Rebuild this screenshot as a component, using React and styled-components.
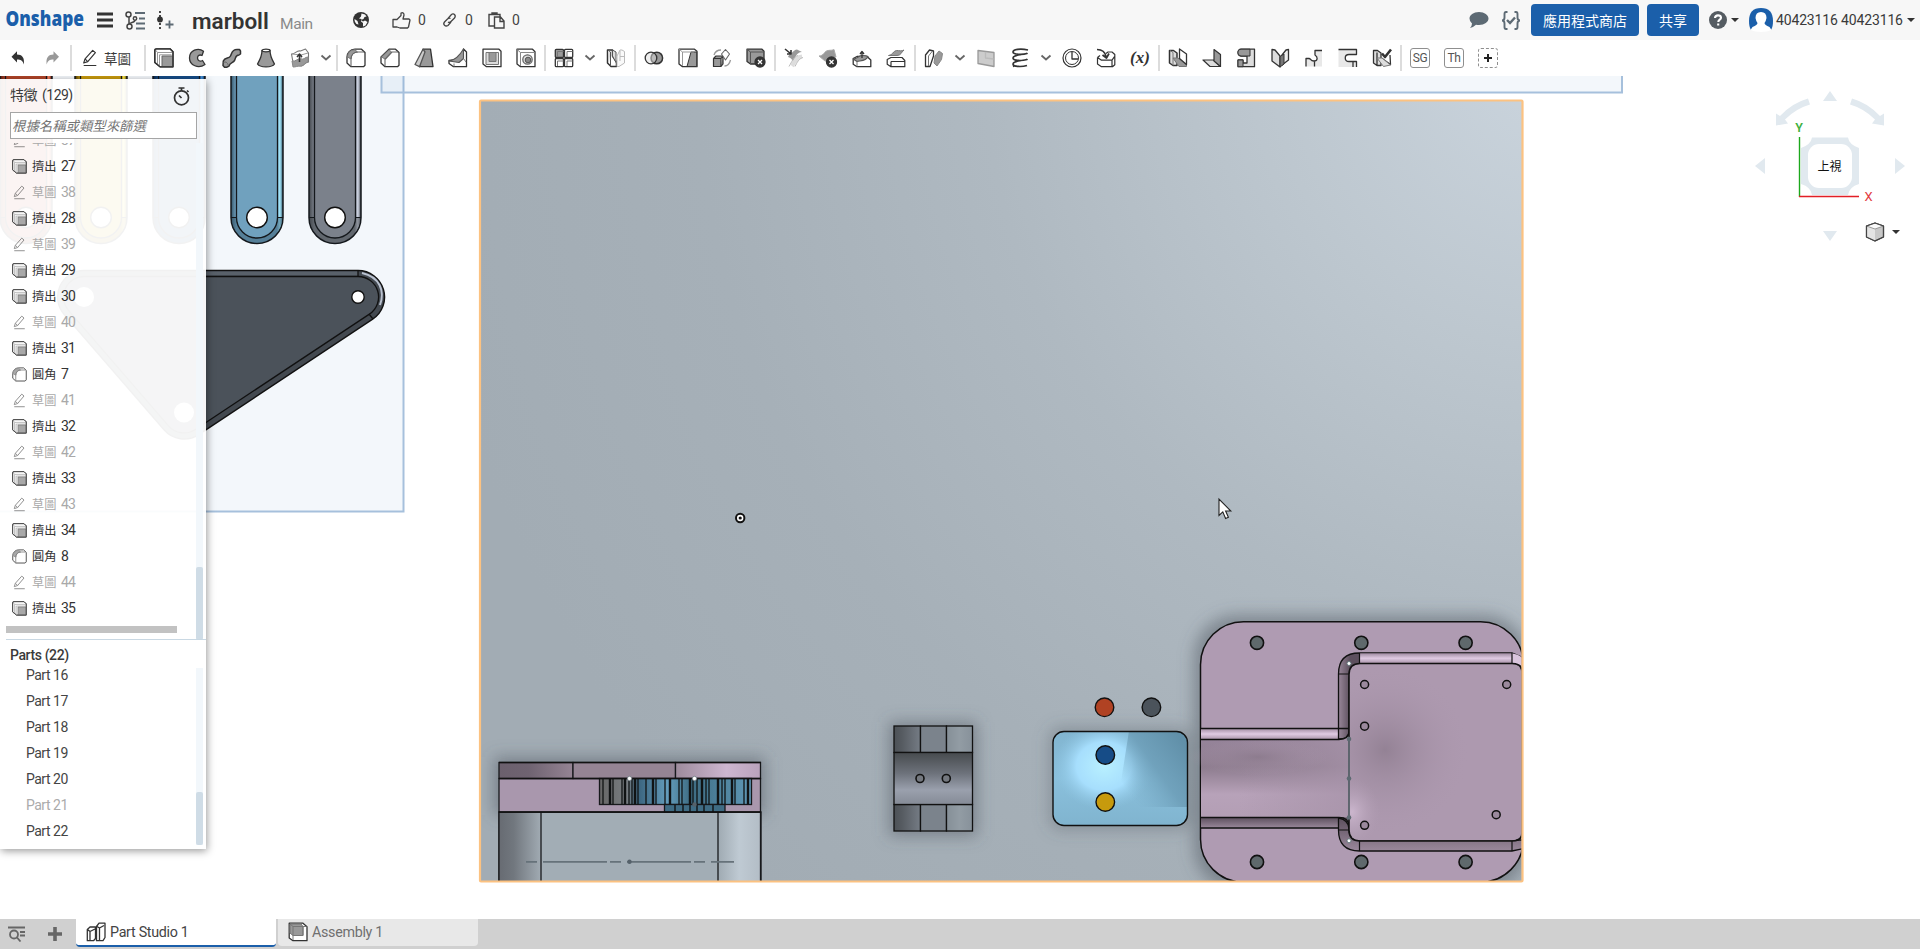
import React from "react";
import styled, { createGlobalStyle, css } from "styled-components";

const GlobalStyle = createGlobalStyle`
  html, body { margin: 0; padding: 0; background: #fff; }
  body { width: 1920px; height: 949px; overflow: hidden; }
  * { box-sizing: border-box; }
`;

const sans = `Roboto, "Noto Sans CJK TC", "Open Sans", sans-serif`;

/* ---------- page frame ---------- */

const Page = styled.div`
  width: 1920px;
  height: 949px;
  display: flex;
  flex-direction: column;
  font-family: ${sans};
  font-size: 14px;
  color: #3a3a3a;
  background: #fff;
`;

const Header = styled.header`
  height: 40px;
  flex: none;
  display: flex;
  align-items: center;
  justify-content: space-between;
  background: #f7f7f7;
  padding: 0 5px 0 6px;
`;

const HeaderSide = styled.div`
  display: flex;
  align-items: center;
  height: 40px;
`;

const Slot = styled.div`
  width: ${(p) => p.$w}px;
  margin-left: ${(p) => p.$gap || 0}px;
  height: 40px;
  flex: none;
  display: flex;
  align-items: center;
  white-space: nowrap;
  svg { display: block; flex: none; overflow: visible; }
`;

const DocName = styled(Slot)`
  font-size: 22.5px;
  font-weight: 600;
  letter-spacing: 0;
  color: #333;
  padding-top: 2px;
`;

const Branch = styled(Slot)`
  font-size: 15.5px;
  letter-spacing: -0.4px;
  color: #8a8a8a;
  padding-top: 7px;
`;

const Count = styled(Slot)`
  font-size: 14px;
  color: #444;
`;

const BlueButton = styled.button`
  width: ${(p) => p.$w}px;
  height: 32px;
  margin-left: ${(p) => p.$gap}px;
  padding: 0 0 1px;
  border: 0;
  border-radius: 4px;
  background: #1b5faa;
  color: #fff;
  font: 14px ${sans};
`;

const UserName = styled(Slot)`
  font-size: 14px;
  letter-spacing: -0.15px;
`;

const Caret = styled.span`
  margin-left: ${(p) => p.$gap}px;
  border: 4px solid transparent;
  border-top-color: #333;
  border-bottom: 0;
  width: 8px;
`;

/* ---------- toolbar ---------- */

const Toolbar = styled.div`
  height: 36px;
  flex: none;
  display: flex;
  align-items: center;
  background: #fff;
  padding-left: 1px;
`;

const Tool = styled.div`
  width: ${(p) => p.$w || 34}px;
  height: 36px;
  flex: none;
  display: flex;
  align-items: center;
  justify-content: center;
  svg { display: block; }
`;

const SketchTool = styled(Tool)`
  gap: 5px;
  font-size: 13.5px;
  justify-content: flex-start;
  padding-left: 8px;
`;

const Divider = styled.div`
  width: 2px;
  height: 26px;
  margin: 0 1px;
  flex: none;
  background: #dcdcdc;
`;

const TextTool = styled.div`
  width: 20px;
  height: 20px;
  border: 1px ${(p) => (p.$dashed ? "dashed" : "solid")} #8f8f8f;
  border-radius: 3px;
  display: flex;
  align-items: center;
  justify-content: center;
  font-size: 12px;
  letter-spacing: -0.3px;
  color: #555;
`;

const Variable = styled.span`
  font: italic bold 17px "Liberation Serif", serif;
  color: #333;
`;

/* ---------- workspace ---------- */

const Workspace = styled.main`
  position: relative;
  height: 843px;
  flex: none;
  overflow: hidden;
`;

const Scene = styled.svg`
  position: absolute;
  inset: 0;
  display: block;
`;

const Panel = styled.aside`
  position: relative;
  margin-top: 3px;
  width: 206px;
  height: 770px;
  background: rgba(255, 255, 255, 0.945);
  box-shadow: 1px 2px 8px rgba(0, 0, 0, 0.4);
  display: flex;
  flex-direction: column;
`;

const PanelHead = styled.div`
  height: 33px;
  flex: none;
  padding: 0 16px 4px 10px;
  display: flex;
  align-items: center;
  justify-content: space-between;
  font-size: 14px;
  letter-spacing: -0.5px;
  word-spacing: 2px;
  svg { margin-top: 6px; }
`;

const Filter = styled.div`
  width: 187px;
  height: 27px;
  flex: none;
  margin: 0 0 4px 10px;
  padding-left: 1px;
  border: 1px solid #a5a5a5;
  background: #fff;
  font-size: 13.4px;
  font-style: italic;
  line-height: 27px;
  color: #757575;
  white-space: nowrap;
`;

const ListArea = styled.div`
  height: ${(p) => p.$h}px;
  flex: none;
  display: flex;
  overflow: hidden;
`;

const List = styled.div`
  width: 196px;
  flex: none;
`;

const FeatureList = styled(List)`
  margin-top: -16px;
`;

const Feature = styled.div`
  height: 26px;
  padding-left: 12px;
  display: flex;
  align-items: center;
  color: ${(p) => (p.$muted ? "#a9a9a9" : "#333")};
  svg { margin: 0 5px 0 0; opacity: 0.85; ${(p) => p.$muted && css`opacity: 0.55;`} }
`;

const FeatureName = styled.span`
  font-size: 12.2px;
  width: 29px;
`;

const FeatureNo = styled.span`
  font-size: 14px;
  letter-spacing: -0.8px;
`;

const Rollback = styled.div`
  width: 171px;
  height: 7px;
  margin: 5px 0 0 6px;
  background: #c2c2c2;
`;

const Track = styled.div`
  width: 7px;
  height: 100%;
  background: #f2f7fb;
  display: flex;
  align-items: flex-end;
`;

const Thumb = styled.div`
  width: 7px;
  height: ${(p) => p.$h}px;
  border-radius: 2px;
  background: #cfdce6;
`;

const PartsHead = styled.div`
  height: 29px;
  flex: none;
  margin: -1px 0 0 6px;
  padding: 0 0 0 4px;
  border-top: 1px solid #c9d8e3;
  line-height: 30px;
  font-size: 14px;
  font-weight: 500;
  letter-spacing: -0.4px;
`;

const PartList = styled(List)`
  margin-top: -6px;
`;

const Part = styled.div`
  height: 26px;
  line-height: 26px;
  padding-left: 26px;
  letter-spacing: -0.5px;
  color: ${(p) => (p.$muted ? "#ababab" : "#444")};
`;

/* ---------- tab bar ---------- */

const TabBar = styled.footer`
  height: 30px;
  flex: none;
  display: flex;
  background: #d0d0d0;
`;

const TabTool = styled.div`
  width: ${(p) => p.$w}px;
  display: flex;
  align-items: center;
  justify-content: center;
  padding-right: 1px;
`;

const Tab = styled.div`
  width: 200px;
  height: ${(p) => (p.$active ? 28 : 27)}px;
  margin-right: 2px;
  padding: 0 0 1px 10px;
  display: flex;
  align-items: center;
  gap: 4px;
  background: ${(p) => (p.$active ? "#fff" : "#e8e8e8")};
  border-bottom: ${(p) => (p.$active ? "2px solid #1b5faa" : "0")};
  border-radius: 0 0 4px 4px;
  color: ${(p) => (p.$active ? "#444" : "#707070")};
  letter-spacing: -0.3px;
  font-size: 14.3px;
`;

/* ---------- icons ---------- */

const K = "#333";
const G = "#999";
const L = "#ddd";

const Glyph = ({ size = 20, children }) => (
  <svg width={size} height={size} viewBox="0 0 20 20" fill="none" stroke={K} strokeWidth="1.3" strokeLinejoin="round">
    {children}
  </svg>
);

const icons = {
  undo: <path d="M3.5 8.8 9 3.2V6.600c5 0 7.800 3 6.800 10-1-4-3-5-6.800-5v3z" fill={K} stroke="none" />,
  redo: <path d="M17 8.800 11.500 3.200v3.400c-5 0-7.800 3-6.800 10 1-4 3-5 6.800-5v3z" fill={G} stroke="none" />,
  pencil: <><path d="M3 15.500 4.500 11 13 1.500 16 4 7.500 14z" /><path d="M4.500 11l3 3M3 18.300h14" /></>,
  extrude: <><path d="M.8 2.500Q.8.800 2.500.800H16l3 3v15H6L.8 14.500z" fill="#fff" /><path d="M3.500 16.500V4.500L1.500 2M3.500 4.500H18M5.500 18V6.800h12" stroke={G} strokeWidth="1" /><path d="M8 8H18.500V18.500H8z" fill={G} stroke="#666" strokeWidth="1" /><path d="M.8 2.500Q.8.800 2.500.800H16l3 3v15H6L.8 14.500z" /></>,
  revolve: <path d="M15.500 3.200C10-1 1.500 2.500 1.500 10s9 11 15.500 6.500l-2.500-4C12 14 9.500 12.500 9.500 10s2-3.800 4.500-2.500z" fill={G} />,
  sweep: <><path d="M1.300 13C3 9 7 11 8.500 8S10 1.500 15 1.500h2.500l1 1.500v3L17 7c-4 0-3 3-4.500 5.500S8 14.500 7 18l-2 1.200H2.500L1 17.500z" fill={G} strokeWidth="1.500" /><path d="M1.500 14.500q3-2 5 3" stroke="#666" strokeWidth="1" /></>,
  loft: <><path d="M6 2.500c0 6-2 9-4.500 13.500C4 19.800 16 19.800 18.500 16 16 11.500 14 8.500 14 2.500z" fill={G} /><ellipse cx="10" cy="2.500" rx="4" ry="1.300" fill="#fff" /></>,
  thicken: <><path d="M1.500 6c4 0 5-4 9-3l5-2 3 4v9c-3 0-4 3-7 4l-8-1z" fill="#fff" stroke="#777" strokeWidth="1.100" /><path d="M2 13c4 1 5-3 9-2 3 1 4-2 7-2v5c-3 0-4 4-7 4-4 0-5 1-8 1z" fill={G} stroke="#888" strokeWidth="1" /><path d="M2 6l9 1 7-2M11 7v4" stroke="#999" strokeWidth="1" /><path d="M9.500 14V6M7 9l2.500-3 2.500 3" stroke={K} strokeWidth="1.500" /></>,
  fillet: <><path d="M5 18.700h12.500l1.500-1.500V4.500l-3.500-3.300H9C4 1.200 1 5 1 9v6z" fill="#fff" /><path d="M1.500 9C1.500 5 4 1.800 9 1.800L11.500 4C8 4 5 7 5 11z" fill={G} stroke="#777" strokeWidth="1" /><path d="M5 18.500V11.500c0-5 3-7.500 7-7.500h6" stroke="#666" strokeWidth="1.100" /></>,
  chamfer: <><path d="M5 18.700h12.500l1.500-1.500V4.500l-3.500-3.300H9L1 9v6z" fill="#fff" /><path d="M1.500 9 9 1.800l2.500 2.200L5 11z" fill={G} stroke="#777" strokeWidth="1" /><path d="M5 18.500V11.500L12 4h6" stroke="#666" strokeWidth="1.100" /></>,
  draft: <><path d="M9 1.200h7.500L19 18.700H5.500z" fill={G} /><path d="M9 1.200 1 16.500l4.500 2.200L11 4z" fill="#ccc" stroke="#555" /></>,
  rib: <><path d="M15.500 1 18.500 4v14.700H5.500L1 15.500v-3L6 12 15 6z" fill="#fff" /><path d="M15.500 1v9.500L11 14.500 1 13c7-1 11-6 14.500-12z" fill={G} stroke="#555" strokeWidth="1.100" /><path d="M15.500 10.500 18 14M6 15.500v3" stroke="#777" strokeWidth="1" /></>,
  shell: <><path d="M1 1.200H17l2 2v15.500H4.500L1 16z" fill="#fff" /><path d="M4 4.500h12.500v12H4z" fill={L} stroke="#777" strokeWidth="1" /><path d="M7 4.500h7v9H7z" fill={G} stroke="#777" strokeWidth="1" /></>,
  hole: <><path d="M1 1.200H16.500l2.500 2.500v15H4.500L1 16z" fill="#fff" /><path d="M4.500 18V4.500H18.500M1 1.500l3.500 3" stroke="#888" strokeWidth="1" /><circle cx="11.500" cy="11.500" r="4.700" fill={L} stroke="#666" /><circle cx="12" cy="12" r="2.800" fill="#888" stroke="#555" strokeWidth="1" /></>,
  pattern: <><rect x="1.300" y="1.300" width="8.200" height="8.200" rx="1" fill={G} /><rect x="10.500" y="1.300" width="8.200" height="8.200" rx="1" fill="#fff" /><rect x="1.300" y="10.500" width="8.200" height="8.200" rx="1" fill="#fff" /><rect x="10.500" y="10.500" width="8.200" height="8.200" rx="1" fill="#fff" /><path d="M3.500 9V3.500h6M13 9V3.500h5.500M3.500 18v-5h6M13 18v-5h5.500" stroke="#777" strokeWidth="1" /></>,
  mirror: <><path d="M1.500 2h5v6l4 6v4.500H5L1.500 15z" fill="#fff" strokeWidth="1.500" /><path d="M6.500 2l3.500 2v10.500L6.500 8zM4.500 18V4L2 2" stroke="#555" fill={L} strokeWidth="1" /><path d="M18.500 3.500 16 2h-2l-3 6v10.500h2l5.500-3.500zM14 8.500h4M14 3v10" fill="#fafafa" stroke="#bbb" strokeWidth="1" /></>,
  boolean: <><circle cx="12.800" cy="10" r="5.800" fill={G} strokeWidth="1.500" /><circle cx="7" cy="10" r="5.800" fill={L} fillOpacity=".5" /></>,
  split: <><path d="M1 1.200H16.500l2.500 2v15.500H4.500L1 16z" fill="#fff" /><path d="M13 4h5.700v14.500H9z" fill={G} strokeWidth="1" /><path d="M4.500 18V4H16M1 1.200l3.500 2.800" stroke={G} strokeWidth="1" /></>,
  transform: <><path d="M1.500 10.500h7.500v8H1.500zM1.500 10.500 4 8h7l-2 2.500M11 8v8l-2 2.500" fill={G} strokeWidth="1.200" /><path d="M9.500 6 13.500 1.500 17.500 6l-4 6z" fill="#fff" stroke="#666" strokeWidth="1.100" /><path d="M2 7C3 4 5 2 9 2M18.500 12c-1 4-3 6-6 6" stroke={G} /></>,
  deleteBody: <><path d="M1 1.200H16l2 2V16H4.500L1 13.500z" fill={G} /><path d="M4.500 16V4H18M1 1.200l3.500 2.800" stroke="#555" strokeWidth="1" /><circle cx="14" cy="14" r="5" fill={K} /><path d="m12 12 4 4m0-4-4 4" stroke="#fff" /></>,
  moveFace: <><path d="M5 7c3-1 4-5 8-5.500L18 4c-6 0-7 7-9 10-1-3-2-4-5-5z" fill={G} stroke="none" /><path d="M8 18c3-4 4-9 10-9.500" stroke={L} strokeWidth="4" /><path d="M5 18.500c3-5 4-9 9-11M11 18.500c2-4 4-8 8-9" stroke="#bbb" strokeWidth="1" /><path d="m1 1 5.500 4.500M7 2v4H3" stroke={K} strokeWidth="1.600" /></>,
  deleteFace: <><path d="M1 8C6 8 6 3 10 2.500s4 0 6-1L18 9c-4 0-6 5-11 4z" fill={G} stroke="#aaa" strokeWidth="1" /><circle cx="13.500" cy="14" r="5" fill={K} /><path d="m11.500 12 4 4m0-4-4 4" stroke="#fff" /></>,
  replaceFace: <><path d="M1.200 10.500 5 8.500h10l3.800 3.500v6.700H5l-3.800-2.500z" fill="#fff" /><path d="M1.200 11C6 11 6 7.500 10 7.500s4 0 6 1c-2 5-8 4-11 5z" fill={G} stroke="#555" strokeWidth="1.100" /><path d="M5 13.500v5" stroke="#777" strokeWidth="1" /><path d="M10 10V3.500M8 6l2-2.500L12 6" /></>,
  offsetFace: <><path d="M1.200 11.500 5 9.500h11l2.800 3v6.200H5l-3.800-2.500zM5 13.500h13.500M5 13.500v5" fill="#fff" strokeWidth="1.200" /><path d="M2.500 7.500c4 0 5-5 8-5s5 1 7.500-.500c-3 2.500-3 5.500-7 5.500z" fill={G} stroke="#777" strokeWidth="1" /></>,
  plane: <><path d="M1.500 7 5.500 2l4 1v5L6 18.500H1.500z" fill="#fff" /><path d="M4.500 18V8l4-5" stroke="#777" strokeWidth="1" /><path d="M11 8 15 3l3.500 2.500-1 6L13 18l-3-3z" fill={G} stroke="#888" strokeWidth="1" /></>,
  surface: <><path d="m2 2.500 16 2v14l-16-3z" fill="#ccc" stroke={G} /><path d="M9.500 4v6l8 1" stroke="#bbb" /></>,
  helix: <path d="M18 2C10 0 3 1.500 3 4s9 3 14 1.500C10 7 3 7 3 10s9 3 14 1.500C10 13 3 13 3 16s9 3 14 1.500M3 16l1 3" strokeWidth="1.700" />,
  clock: <><circle cx="10" cy="10" r="9" strokeWidth="1.200" /><circle cx="10" cy="10" r="6.500" strokeWidth="1" /><path d="M10 4v7h6" /></>,
  derived: <><path d="M1.500 9.500V16l4 2.700h11l2.300-2V6.500L16 4h-4L10 5.500M1.500 9.500l4 2.700H16v6.500M16 12.200l2.500-3.500M1.500 9.500 4 7.500" fill="#fff" strokeWidth="1.200" /><path d="M1 1.500c5 0 8 2 9 7M6.500 7l4 3 2.500-4.500" strokeWidth="1.700" /></>,
  sheet: <><path d="M1.500 2.500h4L9 5v12.500H5L1.500 15z" fill={L} strokeWidth="1.500" /><path d="M5 17.500V4.500L2 2.500" stroke="#777" strokeWidth="1" /><path d="M5 10h5l8.500 7v1.500H11z" fill={G} stroke="#777" strokeWidth="1" /><path d="m11.500 1 7 5v10.500l-7-6z" fill="#fff" /></>,
  flange: <><path d="M1 12h10.500l7 6.500H8z" fill={L} strokeWidth="1.200" /><path d="m12 1.500 6.500 5V18.500L12 13z" fill={G} strokeWidth="1.200" /></>,
  bend: <><path d="M5 1.200h13.500v17.500H2V12h5v3h4V8H5C1 7.500 1 1.200 5 1.200z" fill={L} /><path d="M5 1.200h9V8H5C1 7.500 1 1.200 5 1.200zM2 12h5v6.700H2z" fill={G} strokeWidth="1" /></>,
  unfold: <><path d="m2 1.500 3 .5 5 6v11l-8-6z" fill={L} /><path d="M18.500 1.500 16 2l-4 5v10l6.500-5z" fill="#eee" /><path d="m10 8.500 4-2.500v10l-4 3z" fill="#777" strokeWidth="1" /></>,
  relief: <><path d="M18 2h-7v5c3 2 3 6-1 6S7 11 5 11H2v7.500h16z" fill="#e8e8e8" stroke="none" /><path d="M18 2.500h-7V7c3 2 3 6-1 6S7 10.500 5 10.500H2v8M10.500 13v5.500" /></>,
  corner: <><path d="M.5 1.500H19v5h-8c-5 0-5 7 0 7h8V19H.5z" fill="#e8e8e8" stroke="none" /><path d="M.5 1.500H18.500v5H11c-5 0-5 7 0 7h7.500V19M15 13.500V19" /></>,
  finish: <><path d="M1.500 2.500h4L9 5v12.500H5L1.500 15zM5 17.500V4.500" fill={L} /><path d="m18 7 .5 9.500-9-6.500" fill="#fff" /><path d="M5 10h5l8.500 7-7 1.500z" fill={L} stroke="#777" strokeWidth="1" /><path d="m10 5.500 3 3.500L19 1.500" strokeWidth="2.600" /></>,
  studio: <><path d="M1.300 7.500 4 5h5.500v11.500L7.500 18.700H1.300zM4 9.500V18M1.500 7.500 4 9.500 9 7" fill="#fff" /><path d="M10.500 4.500 13 1.200h6V15.500L17 18.700h-6.500zM13.500 6v12M11 4.500l2.500 1.500L18 3.500" fill="#fff" /></>,
  assembly: <><path d="M1.200 1.200H15l4 3.500v14H5L1.200 16z" fill="#fff" /><path d="M2 2h11l2 2.500v9H5L2 11z" fill="#999" stroke="#777" strokeWidth="1" /><path d="M5 18V4.500h13.500M2 2l3 2.500M15 4.500v9H5" stroke="#777" strokeWidth="1" /></>,
};

const Icon = ({ name, size }) => <Glyph size={size}>{icons[name]}</Glyph>;

const Chevron = () => (
  <Tool $w={18}>
    <svg width="12" height="8" viewBox="0 0 12 8" fill="none" stroke="#666" strokeWidth="1.800"><path d="m1.500 1.500 4.500 4 4.500-4" /></svg>
  </Tool>
);

const toolGroups = [
  ["extrude", "revolve", "sweep", "loft", "thicken", "v"],
  ["fillet", "chamfer", "draft", "rib", "shell", "hole"],
  ["pattern", "v", "mirror"],
  ["boolean", "split", "transform", "deleteBody"],
  ["moveFace", "deleteFace", "replaceFace", "offsetFace"],
  ["plane", "v", "surface", "helix", "v", "clock", "derived", "(x)"],
  ["sheet", "flange", "bend", "unfold", "relief", "corner", "finish"],
];

const renderTool = (name, i) => {
  if (name === "v") return <Chevron key={i} />;
  if (name === "(x)") return <Tool key={i}><Variable>(x)</Variable></Tool>;
  return <Tool key={i}><Icon name={name} /></Tool>;
};

const features = [
  ["s", 37], ["e", 27], ["s", 38], ["e", 28], ["s", 39], ["e", 29], ["e", 30], ["s", 40], ["e", 31],
  ["f", 7], ["s", 41], ["e", 32], ["s", 42], ["e", 33], ["s", 43], ["e", 34], ["f", 8], ["s", 44], ["e", 35],
];
const kinds = {
  s: { name: "草圖", icon: "pencil" },
  e: { name: "擠出", icon: "extrude" },
  f: { name: "圓角", icon: "fillet" },
};

/* ---------- model drawing ---------- */

const Bar = ({ x, id, fill, dark, light }) => (
  <g>
    <defs>
      <linearGradient id={id}>
        <stop offset="0" stopColor={dark} /><stop offset=".1" stopColor={fill} />
        <stop offset=".88" stopColor={fill} /><stop offset=".94" stopColor={light} /><stop offset="1" stopColor={dark} />
      </linearGradient>
    </defs>
    <path d={`M${x - 26} 60V217.500a26 26 0 0 0 52 0V60z`} fill={`url(#${id})`} stroke="#14181c" strokeWidth="1.500" />
    <path d={`M${x - 25} 218a25 25 0 0 0 50 0h-5a20 20 0 0 1-40 0z`} fill={dark} fillOpacity=".45" />
    <path d={`M${x - 20.500} 60V217.500a20.500 20.500 0 0 0 41 0V60z`} fill={fill} stroke="#14181c" strokeWidth="1.300" />
    <path d={`M${x - 26} 217.500h5.500M${x + 20.500} 217.500h5.500`} stroke="#14181c" />
    <circle cx={x} cy="217.500" r="10.300" fill="#fff" stroke="#111" strokeWidth="1.400" />
  </g>
);

const gearLines = [603, 610, 613, 622, 625, 629, 632, 635, 638, 646, 653, 656, 665, 670, 679, 682, 690, 693, 697, 702, 706, 709, 718, 722, 725, 732, 735, 744, 748];

const Model = () => (
  <Scene width="1920" height="843" viewBox="0 76 1920 843">
    <defs>
      <radialGradient id="plate" gradientUnits="userSpaceOnUse" cx="1560" cy="60" r="1150">
        <stop offset="0" stopColor="#cbd5de" /><stop offset=".25" stopColor="#bdc7cf" /><stop offset=".5" stopColor="#afb9c1" /><stop offset=".75" stopColor="#a6b0b8" /><stop offset="1" stopColor="#a2acb4" />
      </radialGradient>
      <linearGradient id="cyl"><stop offset="0" stopColor="#676b72" /><stop offset=".35" stopColor="#71777e" /><stop offset="1" stopColor="#a1abb3" /></linearGradient>
      <linearGradient id="cylR"><stop offset="0" stopColor="#9faab2" /><stop offset=".5" stopColor="#bfcad3" /><stop offset="1" stopColor="#b3bdc6" /></linearGradient>
      <linearGradient id="strip1"><stop offset="0" stopColor="#6b606d" /><stop offset=".4" stopColor="#6f6371" /><stop offset="1" stopColor="#958494" /></linearGradient>
      <linearGradient id="strip2"><stop offset="0" stopColor="#9d8b9c" /><stop offset=".6" stopColor="#cdb6d0" /><stop offset="1" stopColor="#b9a2bb" /></linearGradient>
      <linearGradient id="gear"><stop offset="0" stopColor="#666" /><stop offset=".18" stopColor="#777c80" /><stop offset=".26" stopColor="#3c6680" /><stop offset=".45" stopColor="#649dbc" /><stop offset=".6" stopColor="#3e6c83" /><stop offset="1" stopColor="#5f98b6" /></linearGradient>
      <linearGradient id="dark"><stop offset="0" stopColor="#4c5156" /><stop offset=".3" stopColor="#565b61" /><stop offset="1" stopColor="#757c85" /></linearGradient>
      <linearGradient id="lite"><stop offset="0" stopColor="#858f97" /><stop offset=".5" stopColor="#929ca4" /><stop offset="1" stopColor="#87919a" /></linearGradient>
      <linearGradient id="saddle" x2="0" y2="1"><stop offset="0" stopColor="#474b4e" /><stop offset=".4" stopColor="#6d727b" /><stop offset=".72" stopColor="#9aa0ad" /><stop offset="1" stopColor="#858b96" /></linearGradient>
      <linearGradient id="tray" x2="0" y2="1"><stop offset="0" stopColor="#82b5d0" /><stop offset=".5" stopColor="#8ac0dc" /><stop offset="1" stopColor="#80b4cf" /></linearGradient>
      <radialGradient id="trayGlow"><stop offset="0" stopColor="#b8f0ff" /><stop offset=".55" stopColor="#a8e0ff" stopOpacity=".95" /><stop offset="1" stopColor="#8fc6e3" stopOpacity="0" /></radialGradient>
      <linearGradient id="trayDim" x1="0" y1=".6" x2=".8" y2="0"><stop offset="0" stopColor="#78abc6" stopOpacity="0" /><stop offset=".5" stopColor="#6c9db7" stopOpacity=".85" /><stop offset="1" stopColor="#6190a9" /></linearGradient>
      <linearGradient id="ridge" x2="0" y2="1"><stop offset="0" stopColor="#a08ca2" /><stop offset=".5" stopColor="#e0cbe3" /><stop offset="1" stopColor="#a792a8" /></linearGradient>
      <linearGradient id="groove" x2="0" y2="1"><stop offset="0" stopColor="#5d505e" /><stop offset="1" stopColor="#9a889b" /></linearGradient>
      <linearGradient id="wall" gradientUnits="userSpaceOnUse" x1="1338" x2="1350" y1="0" y2="0"><stop offset="0" stopColor="#9a889b" /><stop offset="1" stopColor="#5d505e" /></linearGradient>
      <linearGradient id="channel" x2="0" y2="1"><stop offset="0" stopColor="#96849a" /><stop offset=".35" stopColor="#8d7c8e" /><stop offset=".7" stopColor="#b7a2b9" /><stop offset="1" stopColor="#b39eb4" /></linearGradient>
      <linearGradient id="channelEnd"><stop offset="0" stopColor="#a793a9" stopOpacity="0" /><stop offset="1" stopColor="#a793a9" stopOpacity=".75" /></linearGradient>
      <radialGradient id="dim"><stop offset="0" stopColor="#8b7a8c" stopOpacity=".75" /><stop offset="1" stopColor="#ad99af" stopOpacity="0" /></radialGradient>
      <radialGradient id="gleam"><stop offset="0" stopColor="#cbb6cd" /><stop offset="1" stopColor="#b19db3" stopOpacity="0" /></radialGradient>
      <filter id="soft" x="-30%" y="-30%" width="160%" height="160%"><feGaussianBlur stdDeviation="8" /></filter>
      <clipPath id="plateClip"><rect x="481" y="101" width="1040.500" height="780.500" /></clipPath>
      <clipPath id="trayClip"><rect x="1053" y="731.500" width="134.500" height="94" rx="11" /></clipPath>
      <clipPath id="deckClip"><rect x="1349" y="663.500" width="173" height="177" rx="10" /></clipPath>
    </defs>

    <rect x="-10" y="60" width="413.500" height="451.500" fill="#5b92c6" fillOpacity=".075" stroke="#a6c0dc" strokeWidth="2" />
    <rect x="381.500" y="60" width="1240.500" height="32.500" fill="#5b92c6" fillOpacity=".075" stroke="#a6c0dc" strokeWidth="2" />

    <Bar x={26} id="b1" fill="#b04428" dark="#54190f" light="#ff8665" />
    <Bar x={101} id="b2" fill="#c79a0d" dark="#4e3b03" light="#ffee4d" />
    <Bar x={179} id="b3" fill="#164c87" dark="#0b2443" light="#4797e2" />
    <Bar x={257} id="b4" fill="#70a1be" dark="#36566a" light="#a8ecff" />
    <Bar x={335} id="b5" fill="#7b818b" dark="#42464c" light="#d2d9e8" />

    <path d="M84 270.500H358a26.500 26.500 0 0 1 14.700 48.600L198.700 434.600a26.500 26.500 0 0 1-34.700-4.800L64 314.300A26.500 26.500 0 0 1 84 270.500z" fill="#434950" stroke="#111" strokeWidth="1.400" />
    <path d="M206 273.500H358" stroke="#59616a" strokeWidth="4" />
    <path d="M362 273c18 4 23 18 18 32" fill="none" stroke="#b9c1cf" strokeWidth="2" />
    <path d="M84 276.500H358a20.500 20.500 0 0 1 11.400 37.600L195.400 429.500a20.500 20.500 0 0 1-26.900-3.700L68.500 310.400A20.500 20.500 0 0 1 84 276.500z" fill="#4b525a" stroke="#111" strokeWidth="1.300" />
    <path d="M358 270v6.500M369 314l4 5" stroke="#111" strokeWidth="1.300" />
    <circle cx="358" cy="297" r="6.200" fill="#fff" stroke="#111" strokeWidth="1.400" />
    <circle cx="84" cy="297" r="10" fill="#fff" />
    <circle cx="184" cy="412.500" r="10" fill="#fff" />

    <rect x="480" y="100.500" width="1042.500" height="781.500" fill="url(#plate)" />
    <g clipPath="url(#plateClip)">
      <g filter="url(#soft)" fill="#4f5860" fillOpacity=".5">
        <rect x="494" y="757" width="271" height="58" />
        <rect x="889" y="722" width="88" height="114" />
        <rect x="1049" y="727" width="142" height="103" rx="12" fillOpacity=".35" />
        <rect x="1194" y="615" width="333" height="275" rx="43" />
      </g>

      <g stroke="#17191c" strokeWidth="1.300">
        <rect x="499" y="812" width="262" height="75" fill="#a2adb5" />
        <rect x="499" y="812" width="42" height="75" fill="url(#cyl)" />
        <rect x="718" y="812" width="42.500" height="75" fill="url(#cylR)" />
        <rect x="499" y="778.500" width="261.500" height="33.500" fill="#a997ad" />
        <rect x="499" y="762.500" width="74" height="16" fill="url(#strip1)" />
        <rect x="573" y="762.500" width="102.500" height="16" fill="#958494" />
        <rect x="675.500" y="762.500" width="85" height="16" fill="url(#strip2)" />
        <rect x="599.500" y="778.500" width="152" height="26" fill="url(#gear)" />
        <rect x="664.500" y="804.500" width="60.500" height="7.500" fill="#3f6c84" />
      </g>
      {gearLines.map((x, i) => (
        <path key={x} d={`M${x} 778.500V804.500`} stroke="#101314" strokeWidth={i % 3 === 1 ? 2.400 : 1.300} />
      ))}
      {[675, 683, 690, 697, 704, 713].map((x) => (
        <path key={x} d={`M${x} 805v7`} stroke="#101314" strokeWidth="1.400" />
      ))}
      <path d="M499 778.500h262M499 762.500h262M499 812h262" stroke="#111" strokeWidth="1.700" />
      <path d="M526 861.800H734" stroke="#66727a" strokeWidth="1.800" strokeDasharray="11 6 64 3" />
      <circle cx="629.500" cy="861.800" r="2.200" fill="#55616a" />
      <circle cx="694.500" cy="804.500" r="2.200" fill="#55616a" />
      <circle cx="629.500" cy="778.500" r="2.200" fill="#fff" stroke="#68757c" strokeWidth=".8" />
      <circle cx="694.500" cy="778.500" r="2.200" fill="#fff" stroke="#68757c" strokeWidth=".8" />

      <g stroke="#111" strokeWidth="1.300">
        {[726, 804.500].map((y) => (
          <g key={y}>
            <rect x="894" y={y} width="26.500" height="26.500" fill="url(#dark)" />
            <rect x="920.500" y={y} width="26" height="26.500" fill="#7b838c" />
            <rect x="946.500" y={y} width="26" height="26.500" fill="url(#lite)" />
          </g>
        ))}
        <rect x="894" y="752.500" width="78.500" height="52" fill="url(#saddle)" />
        <circle cx="920" cy="778.500" r="4" fill="#74787f" strokeWidth="1.600" />
        <circle cx="946.300" cy="778.500" r="4" fill="#74787f" strokeWidth="1.600" />
      </g>

      <g clipPath="url(#trayClip)">
        <rect x="1053" y="731.500" width="134.500" height="94" fill="url(#tray)" />
        <ellipse cx="1104" cy="766" rx="50" ry="44" fill="url(#trayGlow)" />
        <path d="M1129 731h60v76H1117z" fill="url(#trayDim)" />
      </g>
      <rect x="1053" y="731.500" width="134.500" height="94" rx="11" fill="none" stroke="#111" strokeWidth="1.400" />
      <g stroke="#111" strokeWidth="1.400">
        <circle cx="1104.500" cy="707.300" r="9.300" fill="#b04223" />
        <circle cx="1151.400" cy="707.300" r="9.300" fill="#4b535b" />
        <circle cx="1105.300" cy="755" r="9.300" fill="#164c87" />
        <circle cx="1105.300" cy="802" r="9.300" fill="#c79a0d" />
      </g>

      <rect x="1200.500" y="621.700" width="323" height="260.500" rx="43" fill="#af9bb2" stroke="#111" strokeWidth="1.500" />
      <rect x="1201" y="739" width="148" height="79" fill="url(#channel)" />
      <rect x="1240" y="739" width="109" height="79" fill="url(#channelEnd)" />
      <ellipse cx="1258" cy="757" rx="70" ry="18" fill="url(#dim)" />
      <rect x="1201" y="728.500" width="148" height="11" fill="url(#ridge)" />
      <rect x="1201" y="817.500" width="148" height="10.500" fill="url(#groove)" />
      <path d="M1338.500 739V674q0-21 21-21H1512l14 6v10H1360q-11 0-11 11v51q0 8-10.500 8z" fill="url(#wall)" stroke="#111" strokeWidth="1.300" />
      <rect x="1359" y="653.300" width="153" height="10" fill="url(#ridge)" />
      <path d="M1512 653.300q8 1 12 6v10q-4-5-12-6z" fill="#dac5dd" />
      <path d="M1338.500 818v12q0 21 21 21H1512l14-3v-8H1360q-11 0-11-11 0-9-10.500-11z" fill="url(#groove)" stroke="#111" strokeWidth="1.300" />
      <path d="M1201 728.500h148M1201 739.500h138q10 0 10-8M1201 817.500h138q10 0 10 9M1201 828h138" fill="none" stroke="#111" strokeWidth="1.300" />
      <g clipPath="url(#deckClip)">
        <rect x="1349" y="663.500" width="173" height="177" fill="#ad99af" />
        <ellipse cx="1385" cy="750" rx="85" ry="85" fill="url(#dim)" />
        <ellipse cx="1352" cy="812" rx="28" ry="34" fill="url(#gleam)" />
      </g>
      <path d="M1349 739V674.500Q1349 663.500 1360 663.500H1512q10 0 10 8V833q0 8-10 8H1360q-11 0-11-11V817" fill="none" stroke="#111" strokeWidth="1.600" />
      <path d="M1359.500 653v10M1512 653v10M1338.500 674H1349M1338.500 830h10.500M1359.500 841v10M1512 841v10" stroke="#111" strokeWidth="1.200" />
      <path d="M1349 739v79" stroke="#566068" strokeWidth="1.800" />
      {[739, 778.500, 817.500].map((y) => <circle key={y} cx="1349" cy={y} r="2.300" fill="#5d6a72" />)}
      {[663.500, 840.800].map((y) => <circle key={y} cx="1349" cy={y} r="2" fill="#fff" stroke="#5f7478" strokeWidth=".9" />)}
      {[[1257, 642.800], [1361.300, 642.800], [1465.600, 642.800], [1257, 862], [1361.300, 862], [1465.600, 862]].map(([x, y]) => (
        <circle key={`${x}-${y}`} cx={x} cy={y} r="6.600" fill="#5f696c" stroke="#111" strokeWidth="1.600" />
      ))}
      {[[1364.600, 684.500], [1506.700, 684.500], [1364.600, 726.200], [1364.600, 825.300], [1496.200, 814.700]].map(([x, y]) => (
        <circle key={`${x}-${y}`} cx={x} cy={y} r="4" fill="#9b899d" stroke="#111" strokeWidth="1.500" />
      ))}
    </g>
    <rect x="480" y="100.500" width="1042.500" height="781" rx="1" fill="none" stroke="#fcc281" strokeWidth="2.200" />

    <circle cx="740.200" cy="518" r="4.200" fill="#fff" stroke="#111" strokeWidth="2" />
    <circle cx="740.200" cy="518" r="1.600" fill="#111" />
    <path d="M1219 499v16.500l3.800-3.600 2.800 6.600 2.800-1.200-2.800-6.300h5.200z" fill="#fff" stroke="#222" strokeWidth="1.100" />

    <g fill="#e1e9ef">
      <path d="m1823 101 7-10 7 10zM1823 231l7 10 7-10zM1765 158l-10 8 10 8zM1895 158l10 8-10 8z" />
      <path d="M1812 137.500h36q1 7 11 10.500v36q-10 3-11 11h-36q-1-8-11-11v-36q10-3.500 11-10.500z" />
      <path d="M1776 125.500v-12l4 2.500q12-13 28-17.500l2 6q-14 4-25 15l3 4zM1884 125.500v-12l-4 2.500q-12-13-28-17.500l-2 6q14 4 25 15l-3 4z" />
    </g>
    <rect x="1808" y="144" width="44" height="44" rx="11" fill="#fff" />
    <path d="M1799.500 137v60" stroke="#1ca81c" strokeWidth="1.400" />
    <path d="M1799 196.500h60" stroke="#e21f26" strokeWidth="1.400" />
    <text x="1799" y="131.500" textAnchor="middle" fontSize="12.500" fontWeight="600" fill="#3fb13f" fontFamily="Roboto">Y</text>
    <text x="1868.500" y="201" textAnchor="middle" fontSize="13" fill="#e23b40" fontFamily="Roboto">X</text>
    <text x="1829.500" y="170.700" textAnchor="middle" fontSize="12" fill="#111" fontFamily="Noto Sans CJK TC">上視</text>
    <g stroke="#444" strokeWidth="1.200" strokeLinejoin="round">
      <path d="m1866.500 226 8.500-3 8.500 3v11l-8.500 4-8.500-4z" fill="#c8c8c8" />
      <path d="m1866.500 226 8.500 3v12l-8.500-4z" fill="#e4e4e4" stroke="none" />
      <path d="m1866.500 226 8.500 3 8.500-3-8.500-3z" fill="#fafafa" stroke="#888" strokeWidth=".8" />
      <path d="m1866.500 226 8.500-3 8.500 3v11l-8.500 4-8.500-4z" fill="none" />
    </g>
    <path d="M1892 230h8l-4 4z" fill="#333" />
  </Scene>
);

export default function App() {
  return (
    <Page>
      <GlobalStyle />
      <Header>
        <HeaderSide>
          <Slot $w={78}>
            <svg width="78" height="26" viewBox="0 0 78 26">
              <text x="-.5" y="19" fontFamily="Open Sans" fontWeight="800" fontSize="21.500" fill="#1b5faa" textLength="78.500" lengthAdjust="spacingAndGlyphs">Onshape</text>
            </svg>
          </Slot>
          <Slot $w={16} $gap={13}>
            <svg width="16" height="16"><path d="M0 2h16M0 8h16M0 14h16" stroke="#333" strokeWidth="3" /></svg>
          </Slot>
          <Slot $w={20} $gap={12}>
            <svg width="20" height="19" fill="none" stroke="#444" strokeWidth="1.500">
              <circle cx="3.500" cy="3.500" r="2.500" /><circle cx="4.500" cy="15.500" r="2.500" /><circle cx="10" cy="7.500" r="1.700" />
              <path d="M4 6v7M10 9c0 3-5 2-5.500 4" />
              <path d="M10 2h10M14 7.500h6M11 12.500h9M11 17.500h9" stroke="#5d6a74" strokeWidth="1.800" />
            </svg>
          </Slot>
          <Slot $w={17} $gap={12}>
            <svg width="17" height="18"><circle cx="3" cy="8.500" r="2.900" fill="#333" /><path d="M3 0v18" stroke="#333" strokeWidth="1.800" strokeDasharray="2 2" /><path d="M8.500 13.500h8M12.500 9.500v8" stroke="#5d6a74" strokeWidth="1.800" /></svg>
          </Slot>
          <DocName $w={80} $gap={18}>marboll</DocName>
          <Branch $w={34} $gap={8}>Main</Branch>
          <Slot $w={16} $gap={39}>
            <svg width="16" height="16" viewBox="0 0 16 16"><circle cx="8" cy="8" r="8" fill="#333" /><path d="M8.500 1.500 12 2.500l1.500 2-2 .5-1 2-2.500 1 2 1.500 2-1 2.500 1.500-2 3.500-2.500 1V11L8 9.500 8.500 7 6 6.500 8 4.500zM1.500 7l3 2 1 3.500L3.500 12C2 10.500 1.500 9 1.500 7z" fill="#f7f7f7" /></svg>
          </Slot>
          <Slot $w={19} $gap={23}>
            <svg width="19" height="17" viewBox="0 0 19 17" fill="none" stroke="#444" strokeWidth="1.300" strokeLinejoin="round"><path d="M1 7.500h4l4-4V1q3-1 3 2l-1 4h6l1 1-1.500 7-1 1H8L5 15H1z" /></svg>
          </Slot>
          <Count $w={8} $gap={7}>0</Count>
          <Slot $w={13} $gap={17}>
            <svg width="13" height="14" viewBox="0 0 13 14" fill="none" stroke="#444" strokeWidth="1.300"><path d="M5 5.500 8 2q2-2 3.500-.5T11.500 5L8 8.500q-1.500 1.500-3 .5M7.500 5.500Q6 4.500 4.500 6L1.500 9Q0 11 1.500 12.300T5 12.500l3-3.500" /></svg>
          </Slot>
          <Count $w={8} $gap={9}>0</Count>
          <Slot $w={17} $gap={15}>
            <svg width="17" height="17" viewBox="0 0 17 17" fill="none" stroke="#444" strokeWidth="1.400"><path d="M6 14H1V2.500h11V5M4 2.500V1h5v1.500" /><path d="M6.500 5h6l3.500 4v7H6.500zM12 5v4.500h4" /></svg>
          </Slot>
          <Count $w={8} $gap={7}>0</Count>
        </HeaderSide>
        <HeaderSide>
          <Slot $w={20}>
            <svg width="20" height="18"><path d="M10 1c5.500 0 9.500 3 9.500 6.500S15.500 14 10 14q-1.500 0-3-.3Q4 16.500 1 17q2-2 2-4.500Q.5 10.500.5 7.500C.5 4 4.500 1 10 1z" fill="#5d6a74" /></svg>
          </Slot>
          <Slot $w={20} $gap={12}>
            <svg width="20" height="19" fill="none" stroke="#5d6a74" strokeWidth="1.900"><path d="M6.500 1H5Q3.500 1 3.500 3v3.500Q3.500 9.500 1 9.500q2.500 0 2.500 3V16q0 2 1.500 2h1.500M13.500 1H15q1.500 0 1.500 2v3.500q0 3 2.500 3-2.500 0-2.500 3V16q0 2-1.500 2h-1.500" /><path d="M6 9l3 3 5-5.500" strokeWidth="2.400" /></svg>
          </Slot>
          <BlueButton $w={108} $gap={10}>應用程式商店</BlueButton>
          <BlueButton $w={52} $gap={8}>共享</BlueButton>
          <Slot $w={18} $gap={10}>
            <svg width="18" height="18"><circle cx="9" cy="9" r="9" fill="#555c62" /><path d="M6 7q.2-2.600 3-2.600t3 2.300c0 2-2.700 2-2.700 4.300M9.200 12.500v2" fill="none" stroke="#fff" strokeWidth="2.100" /></svg>
          </Slot>
          <Caret $gap={4} />
          <Slot $w={24} $gap={10}>
            <svg width="24" height="24"><path d="M2 22Q0 19 0 13 0 0 12 0t12 13q0 6-2 9z" fill="#1b5faa" /><path d="M12 4q5.500 0 5.500 6-.5 3-2 5 0 2 5 4l2 3q-4 2-10.500 2T1.500 22l2-3q5-2 5-4-1.500-2-2-5 0-6 5.500-6z" fill="#fff" /></svg>
          </Slot>
          <UserName $w={128} $gap={3}>40423116 40423116</UserName>
          <Caret $gap={3} />
        </HeaderSide>
      </Header>

      <Toolbar>
        <Tool><Icon name="undo" /></Tool>
        <Tool><Icon name="redo" /></Tool>
        <Divider />
        <SketchTool $w={70}><Icon name="pencil" size={18} />草圖</SketchTool>
        <Divider />
        {toolGroups.map((group, i) => (
          <React.Fragment key={i}>
            {group.map(renderTool)}
            <Divider />
          </React.Fragment>
        ))}
        <Tool><TextTool>SG</TextTool></Tool>
        <Tool><TextTool>Th</TextTool></Tool>
        <Tool><TextTool $dashed><svg width="8" height="8"><path d="M0 4h8M4 0v8" stroke="#222" strokeWidth="2" /></svg></TextTool></Tool>
      </Toolbar>

      <Workspace>
        <Model />
        <Panel>
          <PanelHead>
            特徵 (129)
            <svg width="17" height="19" fill="none" stroke="#333" strokeWidth="1.700"><circle cx="8.500" cy="10.800" r="7" /><path d="M5.500 1h6M8.500 1v3M14 3.500l1.500 1.500M8.500 11 6 8.500" /></svg>
          </PanelHead>
          <Filter>根據名稱或類型來篩選</Filter>
          <ListArea $h={497}>
            <FeatureList>
              {features.map(([kind, no]) => (
                <Feature key={kind + no} $muted={kind === "s"}>
                  <Icon name={kinds[kind].icon} size={15} />
                  <FeatureName>{kinds[kind].name}</FeatureName>
                  <FeatureNo>{no}</FeatureNo>
                </Feature>
              ))}
              <Rollback />
            </FeatureList>
            <Track><Thumb $h={73} /></Track>
          </ListArea>
          <PartsHead>Parts (22)</PartsHead>
          <ListArea $h={177}>
            <PartList>
              {[16, 17, 18, 19, 20, 21, 22].map((n) => (
                <Part key={n} $muted={n === 21}>Part {n}</Part>
              ))}
            </PartList>
            <Track><Thumb $h={53} /></Track>
          </ListArea>
        </Panel>
      </Workspace>

      <TabBar>
        <TabTool $w={34}>
          <svg width="17" height="16" fill="none" stroke="#666" strokeWidth="1.800"><path d="M0 1.500h17M12 6h5M12 9.500h5" /><circle cx="6" cy="8.500" r="4" /><path d="m9 11.500 3.500 4" /></svg>
        </TabTool>
        <TabTool $w={42}>
          <svg width="14" height="14"><path d="M0 7h14M7 0v14" stroke="#666" strokeWidth="3.600" /></svg>
        </TabTool>
        <Tab $active><Icon name="studio" />Part Studio 1</Tab>
        <Tab><Icon name="assembly" />Assembly 1</Tab>
      </TabBar>
    </Page>
  );
}
